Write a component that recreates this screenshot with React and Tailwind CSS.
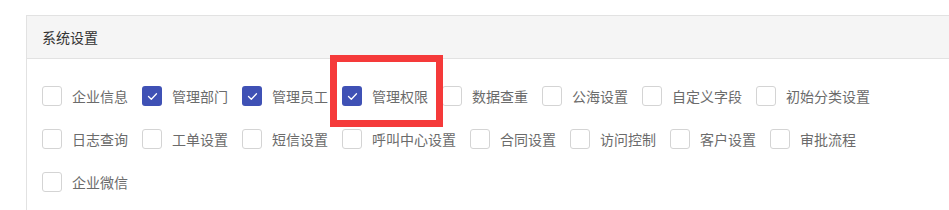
import React from 'react';

const items = [
  { name: '企业信息', checked: false },
  { name: '管理部门', checked: true },
  { name: '管理员工', checked: true },
  { name: '管理权限', checked: true },
  { name: '数据查重', checked: false },
  { name: '公海设置', checked: false },
  { name: '自定义字段', checked: false },
  { name: '初始分类设置', checked: false },
  { name: '日志查询', checked: false },
  { name: '工单设置', checked: false },
  { name: '短信设置', checked: false },
  { name: '呼叫中心设置', checked: false },
  { name: '合同设置', checked: false },
  { name: '访问控制', checked: false },
  { name: '客户设置', checked: false },
  { name: '审批流程', checked: false },
  { name: '企业微信', checked: false },
];

const Box = ({ checked }) =>
  checked ? (
    <span className="w-5 h-5 rounded-[3px] bg-[#3f51b5] flex items-center justify-center">
      <svg width="11" height="9" viewBox="0 0 11 9" fill="none">
        <path d="M1.5 4.5 L4.3 7.2 L9.5 1.8" stroke="#fff" strokeWidth="1.3" strokeLinecap="round" strokeLinejoin="round" />
      </svg>
    </span>
  ) : (
    <span className="w-5 h-5 rounded-[3px] border border-[#d4d4d4] bg-white" />
  );

export default function App() {
  return (
    <div
      className="relative w-[949px] h-[210px] overflow-hidden bg-white pl-[26px] pt-[15px]"
      style={{ fontFamily: '"Noto Sans CJK SC", "Noto Sans", sans-serif' }}
    >
      <div className="w-[940px] min-h-[240px] border-l border-t border-[#e2e2e2]">
        {/* 标题 */}
        <div className="h-[43px] bg-[#f5f5f5] border-b border-[#e2e2e2] px-[15px] flex items-center text-[14px] text-[#333]">
          系统设置
        </div>
        {/* 权限列表 */}
        <div className="pl-[15px] pt-[27px] flex flex-wrap gap-y-[23px]">
          {items.map(item => (
            <label key={item.name} className="flex items-center mr-[14px] h-5">
              <Box checked={item.checked} />
              <span className="ml-[10px] text-[14px] text-[#6b6b6b] leading-5">{item.name}</span>
            </label>
          ))}
        </div>
      </div>

      {/* 红色标注框 */}
      <div className="absolute left-[330px] top-[55px] w-[113px] h-[72px] border-[7px] border-[#f53a3a]" />
    </div>
  );
}
